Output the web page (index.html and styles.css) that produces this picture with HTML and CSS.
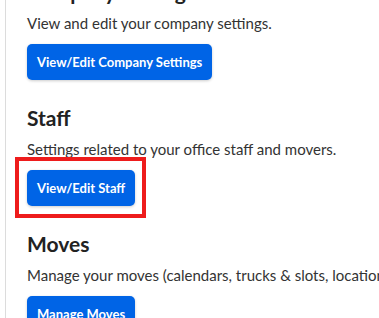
FILE: index.html
```html
<!DOCTYPE html>
<html lang="en">
<head>
	<meta charset="UTF-8">
	<title>Settings</title>
	<link rel="stylesheet" href="styles.css">
</head>
<body>
	<div id="panel">
		<div class="section">
			<h2>Company Settings</h2>
			<p>View and edit your company settings.</p>
			<a class="btn" href="#">View/Edit Company Settings</a>
		</div>
		<div class="section">
			<h2>Staff</h2>
			<p>Settings related to your office staff and movers.</p>
			<span class="marked"><a class="btn" href="#">View/Edit Staff</a></span>
		</div>
		<div class="section">
			<h2>Moves</h2>
			<p>Manage your moves (calendars, trucks &amp; slots, locations and more).</p>
			<a class="btn" href="#">Manage Moves</a>
		</div>
	</div>
</body>
</html>
```

FILE: styles.css
```css
html,
body {
	margin: 0;
	padding: 0;
	background: #fff;
	overflow: hidden;
}
body {
	font-family: Lato, "Noto Sans", sans-serif;
	color: #222;
}
#panel {
	margin: -22px 0 0 5px;
	padding-left: 21px;
	border-left: 1px solid #dcdcdc;
	min-height: 400px;
	white-space: nowrap;
}
.section {
	padding-bottom: 24px;
}
.section h2 {
	margin: 0 0 6px;
	font-size: 21px;
	line-height: 28px;
	font-weight: 700;
	color: #222;
}
.section p {
	margin: 0 0 10px;
	font-size: 15px;
	line-height: 22px;
	color: #333;
}
.btn {
	display: inline-block;
	height: 36px;
	line-height: 36px;
	padding: 0 10px;
	border-radius: 5px;
	background: #0064e6;
	color: #fff;
	font-size: 13px;
	font-weight: 700;
	text-decoration: none;
	box-shadow: 0 1px 3px rgba(0, 0, 0, .2);
	vertical-align: top;
}
.marked {
	position: relative;
	display: inline-block;
	vertical-align: top;
}
.marked::after {
	content: "";
	position: absolute;
	left: -12px;
	right: -11px;
	top: -13px;
	bottom: -12px;
	border: 4px solid #ee1c1c;
	pointer-events: none;
}
```
